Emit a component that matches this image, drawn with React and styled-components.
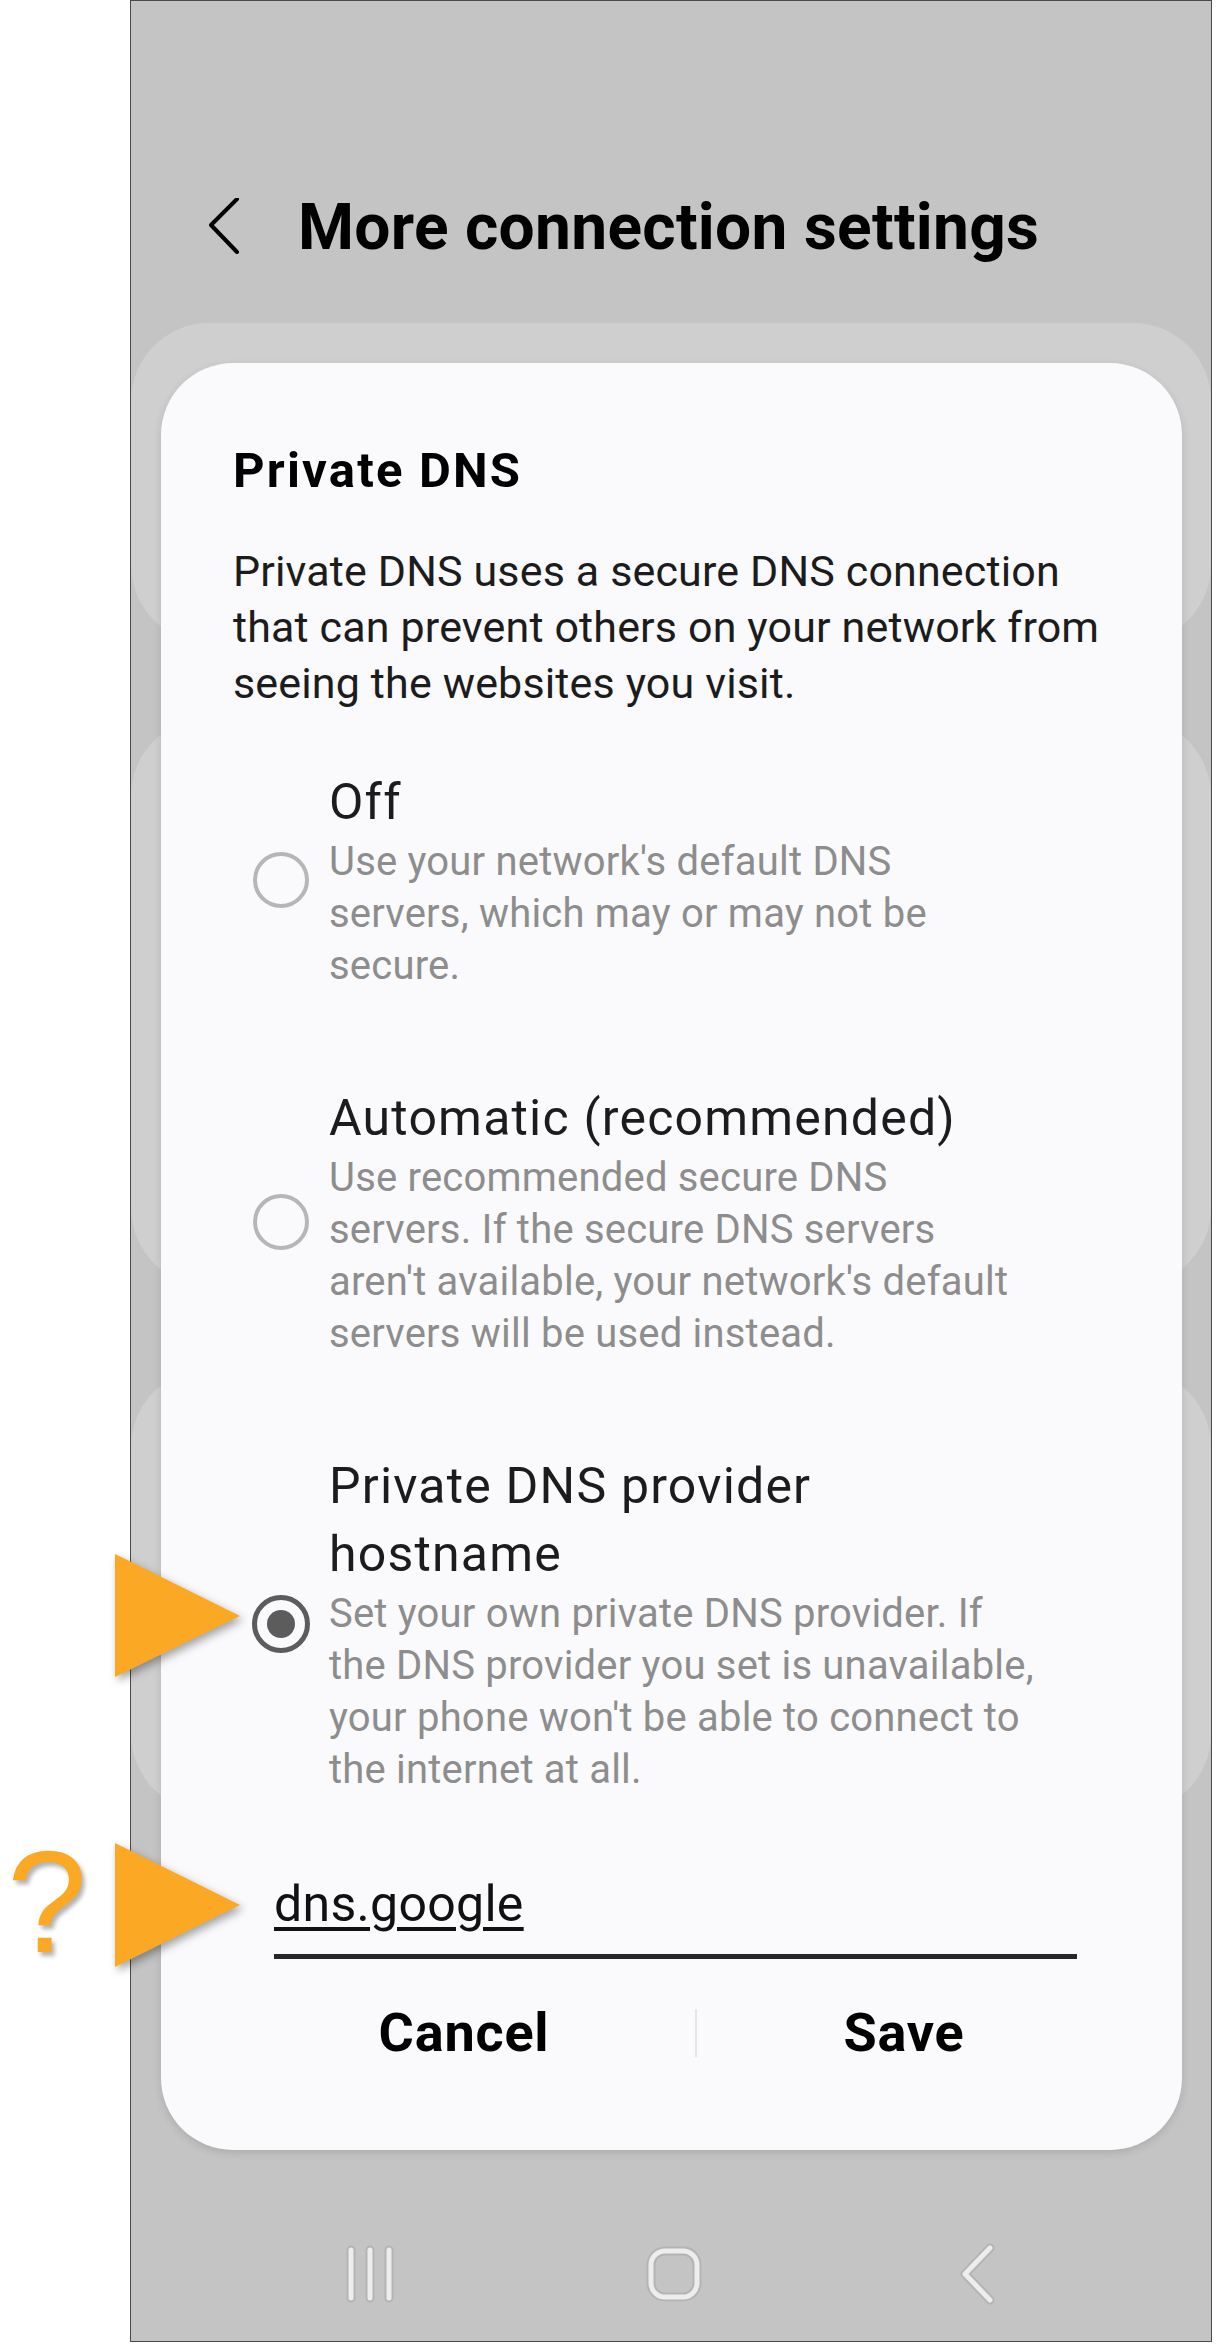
import React from 'react';
import styled, { createGlobalStyle } from 'styled-components';

const GlobalStyle = createGlobalStyle`
    html, body {
        margin: 0;
        padding: 0;
        background: #ffffff;
    }
    body {
        font-family: Roboto, 'Noto Sans', Arial, sans-serif;
        -webkit-font-smoothing: antialiased;
    }
`;

const Page = styled.div`
    position: relative;
    width: 1216px;
    height: 2344px;
    overflow: hidden;
`;

const Phone = styled.div`
    margin-left: 130px;
    width: 1080px;
    height: 2340px;
    border: 1px solid #4a4a4a;
    background: #c4c4c4;
    display: flex;
    flex-direction: column;
`;

const Header = styled.div`
    height: 322px;
    box-sizing: border-box;
    padding: 189px 0 0 78px;
    display: flex;
    align-items: flex-start;
    gap: 57px;
`;

const BackIcon = styled.svg`
    margin-top: 8px;
    flex-shrink: 0;
`;

const Title = styled.h1`
    margin: 0;
    font-size: 64px;
    line-height: 76px;
    font-weight: 700;
    letter-spacing: 0.3px;
    color: #000;
`;

const Stack = styled.div`
    flex: 1;
    display: grid;
    align-items: start;
    & > * {
        grid-area: 1 / 1;
    }
`;

const CardList = styled.div`
    display: flex;
    flex-direction: column;
`;

const Card = styled.div`
    height: ${p => p.$h}px;
    margin-top: ${p => p.$gap}px;
    border-radius: 78px;
    background: #cfcfcf;
`;

const Dialog = styled.div`
    margin: 40px 29px 0 30px;
    padding: 78px 70px 85px 72px;
    background: #fafafc;
    border-radius: 72px;
    box-shadow: 0 3px 8px rgba(0, 0, 0, 0.12);
`;

const DialogTitle = styled.h2`
    margin: 0;
    font-size: 49px;
    line-height: 60px;
    font-weight: 700;
    letter-spacing: 2.2px;
    color: #000;
`;

const Message = styled.p`
    margin: 42px 0 0;
    font-size: 43px;
    line-height: 56px;
    letter-spacing: 0.15px;
    color: #1c1c1c;
    white-space: pre-line;
`;

const Options = styled.div`
    margin-top: 57px;
    display: flex;
    flex-direction: column;
    gap: 92px;
`;

const Option = styled.div`
    display: flex;
    align-items: center;
`;

const RadioCol = styled.div`
    width: 96px;
    flex-shrink: 0;
    display: flex;
    justify-content: center;
`;

const Radio = styled.span`
    box-sizing: border-box;
    width: ${p => (p.$checked ? 58 : 56)}px;
    height: ${p => (p.$checked ? 58 : 56)}px;
    border-radius: 50%;
    border: ${p => (p.$checked ? '5px solid #5c5c5c' : '4px solid #b6b6b6')};
    display: flex;
    align-items: center;
    justify-content: center;
    &::after {
        content: '';
        display: ${p => (p.$checked ? 'block' : 'none')};
        width: 28px;
        height: 28px;
        border-radius: 50%;
        background: #5c5c5c;
    }
`;

const OptionText = styled.div`
    display: flex;
    flex-direction: column;
`;

const OptionTitle = styled.div`
    font-size: 50px;
    line-height: 68px;
    letter-spacing: 1.2px;
    color: #1c1c1c;
    white-space: pre-line;
`;

const OptionDesc = styled.div`
    font-size: 40px;
    line-height: 52px;
    letter-spacing: 0.2px;
    color: #8d8d8d;
    white-space: pre-line;
`;

const Input = styled.div`
    margin: 78px 0 0 41px;
    width: 803px;
    padding-bottom: 20px;
    border-bottom: 5px solid #262626;
    font-size: 50px;
    line-height: 60px;
    letter-spacing: 0.3px;
    color: #111;
    span {
        text-decoration: underline;
        text-decoration-thickness: 4px;
        text-underline-offset: 6px;
    }
`;

const Buttons = styled.div`
    margin-top: 42px;
    display: grid;
    grid-template-columns: 462px 2px 414px;
    align-items: center;
    height: 64px;
`;

const Button = styled.button`
    border: 0;
    background: none;
    padding: 0;
    font-family: inherit;
    font-size: 54px;
    line-height: 64px;
    font-weight: 700;
    letter-spacing: 0.8px;
    color: #000;
`;

const Divider = styled.span`
    width: 2px;
    height: 48px;
    background: #e6e6e6;
`;

const NavBar = styled.div`
    height: 134px;
    padding-left: 6px;
    display: grid;
    grid-template-columns: repeat(3, 304px);
    justify-content: center;
    align-items: center;
    justify-items: center;
`;

const Arrow = styled.svg`
    position: absolute;
    left: 115px;
    top: ${p => p.$top}px;
    filter: drop-shadow(3px 4px 4px rgba(0, 0, 0, 0.35));
`;

const Question = styled.div`
    position: absolute;
    left: 7px;
    top: 1831px;
    font-family: 'Liberation Sans', Arial, sans-serif;
    font-size: 144px;
    line-height: 144px;
    color: #fba924;
    text-shadow: 3px 4px 4px rgba(0, 0, 0, 0.3);
`;

const options = [
    {
        title: 'Off',
        desc: "Use your network's default DNS\nservers, which may or may not be\nsecure.",
    },
    {
        title: 'Automatic (recommended)',
        desc: "Use recommended secure DNS\nservers. If the secure DNS servers\naren't available, your network's default\nservers will be used instead.",
    },
    {
        title: 'Private DNS provider\nhostname',
        desc: "Set your own private DNS provider. If\nthe DNS provider you set is unavailable,\nyour phone won't be able to connect to\nthe internet at all.",
        checked: true,
    },
];

const NavStroke = ({ children }) => (
    <>
        <g stroke='#b4b4b4' strokeWidth='9' fill='none' strokeLinecap='round' strokeLinejoin='round'>
            {children}
        </g>
        <g stroke='#ededed' strokeWidth='5' fill='none' strokeLinecap='round' strokeLinejoin='round'>
            {children}
        </g>
    </>
);

const App = () => {
    return (
        <Page>
            <GlobalStyle />
            <Phone>
                <Header>
                    <BackIcon width='32' height='56' viewBox='0 0 32 56'>
                        <path d='M28 1 L2 27 L28 54' fill='none' stroke='#000' strokeWidth='4' strokeLinecap='round' strokeLinejoin='round' />
                    </BackIcon>
                    <Title>More connection settings</Title>
                </Header>
                <Stack>
                    <CardList>
                        <Card $h={320} $gap={0} />
                        <Card $h={568} $gap={75} />
                        <Card $h={443} $gap={83} />
                    </CardList>
                    <Dialog>
                        <DialogTitle>Private DNS</DialogTitle>
                        <Message>
                            {'Private DNS uses a secure DNS connection\nthat can prevent others on your network from\nseeing the websites you visit.'}
                        </Message>
                        <Options>
                            {options.map(option => (
                                <Option key={option.title}>
                                    <RadioCol>
                                        <Radio $checked={option.checked} />
                                    </RadioCol>
                                    <OptionText>
                                        <OptionTitle>{option.title}</OptionTitle>
                                        <OptionDesc>{option.desc}</OptionDesc>
                                    </OptionText>
                                </Option>
                            ))}
                        </Options>
                        <Input>
                            <span>dns.google</span>
                        </Input>
                        <Buttons>
                            <Button>Cancel</Button>
                            <Divider />
                            <Button>Save</Button>
                        </Buttons>
                    </Dialog>
                </Stack>
                <NavBar>
                    <svg width='52' height='60' viewBox='0 0 52 60'>
                        <NavStroke>
                            <path d='M7 6 V54 M26 6 V54 M45 6 V54' />
                        </NavStroke>
                    </svg>
                    <svg width='58' height='58' viewBox='0 0 58 58'>
                        <NavStroke>
                            <rect x='6' y='6' width='46' height='46' rx='14' />
                        </NavStroke>
                    </svg>
                    <svg width='40' height='62' viewBox='0 0 40 62'>
                        <NavStroke>
                            <path d='M32 5 L7 31 L32 57' />
                        </NavStroke>
                    </svg>
                </NavBar>
            </Phone>
            <Arrow $top={1554} width='130' height='130' viewBox='0 0 130 130'>
                <polygon points='0,0 0,123 125,62' fill='#fba924' />
            </Arrow>
            <Arrow $top={1843} width='130' height='130' viewBox='0 0 130 130'>
                <polygon points='0,0 0,124 125,62' fill='#fba924' />
            </Arrow>
            <Question>?</Question>
        </Page>
    );
};

export default App;
